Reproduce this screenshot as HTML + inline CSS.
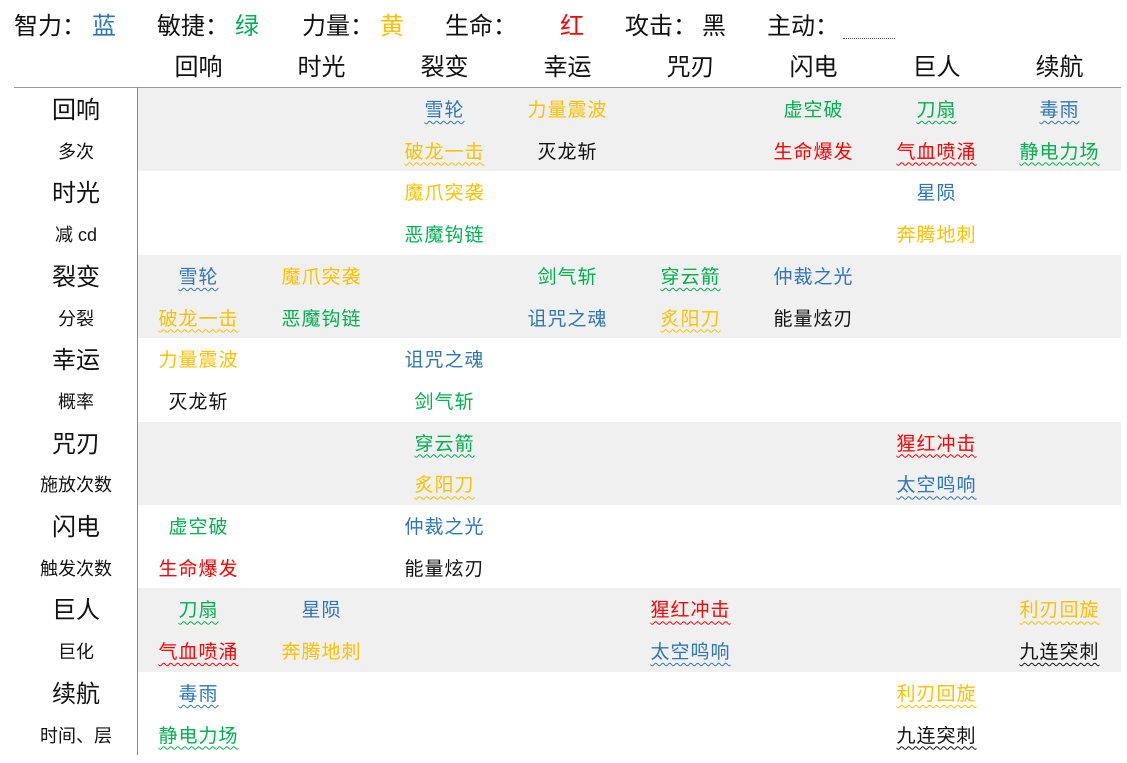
<!DOCTYPE html>
<html><head><meta charset="utf-8"><style>
body{margin:0;width:1127px;height:763px;background:#fff;position:relative;overflow:hidden;font-family:"Liberation Sans","Noto Sans CJK SC",sans-serif;color:#111}
.a{position:absolute;white-space:nowrap}
.t{font-size:24px;top:8px;line-height:32px;font-family:"Noto Sans CJK SC",sans-serif}
.h{font-size:24px;top:51px;line-height:34px;width:123px;text-align:center}
.band{position:absolute;left:138px;width:983px;height:83.4px;background:#f0f0f0}
.row{position:absolute;left:0;height:41.7px;line-height:41.7px;width:1127px;padding-top:2px}
.lab{position:absolute;left:15px;width:122px;text-align:center}
.big{font-size:24px}.sm{font-size:18px}
.c{position:absolute;width:123px;text-align:center;font-size:19px;letter-spacing:1px}
.B{color:#2e75b6}.G{color:#00b050}.Y{color:#ffc000}.R{color:#ff0000}.K{color:#111}
.w{text-decoration:underline wavy;text-decoration-thickness:1px;text-underline-offset:4px}
</style></head><body>
<span class="a t" style="left:14px">智力：</span><span class="a t B" style="left:92px">蓝</span>
<span class="a t" style="left:157px">敏捷：</span><span class="a t G" style="left:235px">绿</span>
<span class="a t" style="left:302px">力量：</span><span class="a t Y" style="left:380px">黄</span>
<span class="a t" style="left:445px">生命：</span><span class="a t R" style="left:560px">红</span>
<span class="a t" style="left:625px">攻击：</span><span class="a t" style="left:702px">黑</span>
<span class="a t" style="left:767px">主动：</span>
<div class="a" style="left:843px;top:35px;width:52px;height:3px;border-bottom:1px dotted #555"></div>

<span class="a h" style="left:137px">回响</span><span class="a h" style="left:260px">时光</span><span class="a h" style="left:383px">裂变</span><span class="a h" style="left:506px">幸运</span><span class="a h" style="left:629px">咒刃</span><span class="a h" style="left:752px">闪电</span><span class="a h" style="left:875px">巨人</span><span class="a h" style="left:998px">续航</span>

<div class="a" style="left:14px;top:87px;width:1107px;height:1px;background:#999"></div>
<div class="band" style="top:88px"></div><div class="band" style="top:254.8px"></div><div class="band" style="top:421.6px"></div><div class="band" style="top:588.4px"></div>
<div class="a" style="left:137px;top:87px;width:1px;height:668px;background:#888"></div>

<div class="row" style="top:88px"><span class="lab big">回响</span><span class="c B w" style="left:383px">雪轮</span><span class="c Y" style="left:506px">力量震波</span><span class="c G" style="left:752px">虚空破</span><span class="c G w" style="left:875px">刀扇</span><span class="c B w" style="left:998px">毒雨</span></div>
<div class="row" style="top:129.7px"><span class="lab sm">多次</span><span class="c Y w" style="left:383px">破龙一击</span><span class="c K" style="left:506px">灭龙斩</span><span class="c R" style="left:752px">生命爆发</span><span class="c R w" style="left:875px">气血喷涌</span><span class="c G w" style="left:998px">静电力场</span></div>
<div class="row" style="top:171.4px"><span class="lab big">时光</span><span class="c Y" style="left:383px">魔爪突袭</span><span class="c B" style="left:875px">星陨</span></div>
<div class="row" style="top:213.1px"><span class="lab sm">减 cd</span><span class="c G" style="left:383px">恶魔钩链</span><span class="c Y" style="left:875px">奔腾地刺</span></div>
<div class="row" style="top:254.8px"><span class="lab big">裂变</span><span class="c B w" style="left:137px">雪轮</span><span class="c Y" style="left:260px">魔爪突袭</span><span class="c G" style="left:506px">剑气斩</span><span class="c G w" style="left:629px">穿云箭</span><span class="c B" style="left:752px">仲裁之光</span></div>
<div class="row" style="top:296.5px"><span class="lab sm">分裂</span><span class="c Y w" style="left:137px">破龙一击</span><span class="c G" style="left:260px">恶魔钩链</span><span class="c B" style="left:506px">诅咒之魂</span><span class="c Y w" style="left:629px">炙阳刀</span><span class="c K" style="left:752px">能量炫刃</span></div>
<div class="row" style="top:338.2px"><span class="lab big">幸运</span><span class="c Y" style="left:137px">力量震波</span><span class="c B" style="left:383px">诅咒之魂</span></div>
<div class="row" style="top:379.9px"><span class="lab sm">概率</span><span class="c K" style="left:137px">灭龙斩</span><span class="c G" style="left:383px">剑气斩</span></div>
<div class="row" style="top:421.6px"><span class="lab big">咒刃</span><span class="c G w" style="left:383px">穿云箭</span><span class="c R w" style="left:875px">猩红冲击</span></div>
<div class="row" style="top:463.3px"><span class="lab sm">施放次数</span><span class="c Y w" style="left:383px">炙阳刀</span><span class="c B w" style="left:875px">太空鸣响</span></div>
<div class="row" style="top:505px"><span class="lab big">闪电</span><span class="c G" style="left:137px">虚空破</span><span class="c B" style="left:383px">仲裁之光</span></div>
<div class="row" style="top:546.7px"><span class="lab sm">触发次数</span><span class="c R" style="left:137px">生命爆发</span><span class="c K" style="left:383px">能量炫刃</span></div>
<div class="row" style="top:588.4px"><span class="lab big">巨人</span><span class="c G w" style="left:137px">刀扇</span><span class="c B" style="left:260px">星陨</span><span class="c R w" style="left:629px">猩红冲击</span><span class="c Y w" style="left:998px">利刃回旋</span></div>
<div class="row" style="top:630.1px"><span class="lab sm">巨化</span><span class="c R w" style="left:137px">气血喷涌</span><span class="c Y" style="left:260px">奔腾地刺</span><span class="c B w" style="left:629px">太空鸣响</span><span class="c K w" style="left:998px">九连突刺</span></div>
<div class="row" style="top:671.8px"><span class="lab big">续航</span><span class="c B w" style="left:137px">毒雨</span><span class="c Y w" style="left:875px">利刃回旋</span></div>
<div class="row" style="top:713.5px"><span class="lab sm">时间、层</span><span class="c G w" style="left:137px">静电力场</span><span class="c K w" style="left:875px">九连突刺</span></div>
</body></html>
